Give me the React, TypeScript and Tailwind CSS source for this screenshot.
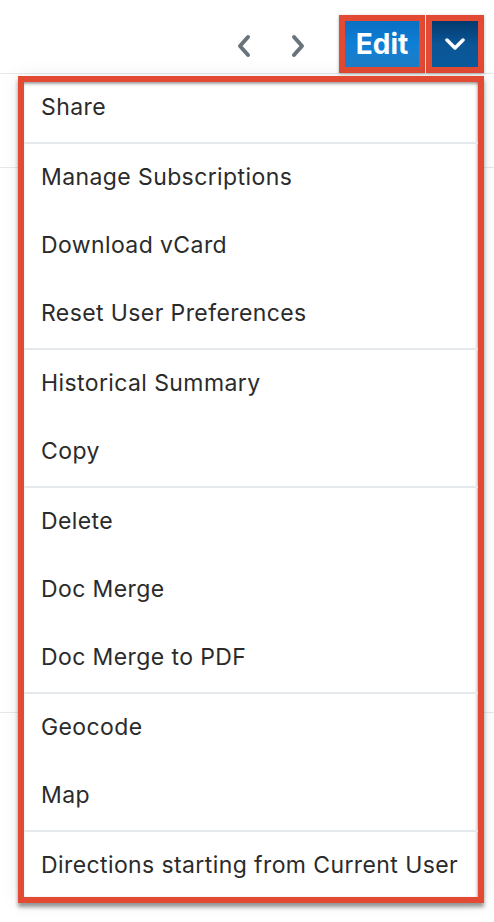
import React from "react";

const groups: string[][] = [
  ["Share"],
  ["Manage Subscriptions", "Download vCard", "Reset User Preferences"],
  ["Historical Summary", "Copy"],
  ["Delete", "Doc Merge", "Doc Merge to PDF"],
  ["Geocode", "Map"],
  ["Directions starting from Current User"],
];

export default function App() {
  return (
    <div
      className="relative w-[494px] h-[922px] bg-white overflow-hidden"
      style={{ fontFamily: "Inter, 'Noto Sans', sans-serif" }}
    >
      {/* header */}
      <header className="h-[74px] border-b border-[#e6e9ec] flex items-start justify-end">
        <div className="flex items-center gap-[38px] mt-[34px] mr-[33px]">
          <svg width="16" height="24" viewBox="0 0 16 24" fill="none">
            <polyline points="12,3 4,12 12,21" stroke="#6b737a" strokeWidth="4" strokeLinecap="round" strokeLinejoin="round" />
          </svg>
          <svg width="16" height="24" viewBox="0 0 16 24" fill="none">
            <polyline points="4,3 12,12 4,21" stroke="#6b737a" strokeWidth="4" strokeLinecap="round" strokeLinejoin="round" />
          </svg>
        </div>
        <div className="flex mt-[15px] mr-[10px]">
          <div className="border-[6px] border-[#e34a33] shadow-[0_1px_3px_rgba(0,0,0,0.3)]">
            <button className="w-[74px] h-[46px] bg-gradient-to-b from-[#0a6fc2] via-[#0d7fd6] to-[#1f7dc6] text-white font-bold text-[28px] leading-none flex items-center justify-center">
              Edit
            </button>
          </div>
          <div className="w-[1px] bg-white" />
          <div className="border-[6px] border-[#e34a33] shadow-[0_1px_3px_rgba(0,0,0,0.3)]">
            <button className="w-[46px] h-[46px] bg-gradient-to-b from-[#033a6e] via-[#0a5596] to-[#0b5a9c] flex items-center justify-center">
              <svg width="22" height="12" viewBox="0 0 22 12" fill="none">
                <polyline points="3,2 11,10 19,2" stroke="#ffffff" strokeWidth="3.5" strokeLinecap="round" strokeLinejoin="round" />
              </svg>
            </button>
          </div>
        </div>
      </header>

      {/* page rows behind */}
      <div className="h-[94px] border-b border-[#e6e9ec]" />
      <div className="h-[545px] border-b border-[#e6e9ec]" />

      {/* dropdown menu (annotated) */}
      <div className="absolute left-[18px] top-[76px] w-[466px] h-[827px] border-[6px] border-[#e34a33] shadow-[0_4px_4px_rgba(0,0,0,0.4),0_0_18px_rgba(0,0,0,0.08)] bg-white">
        <div className="h-full overflow-hidden shadow-[inset_0_3px_3px_-1px_rgba(0,0,0,0.35),inset_-2px_0_3px_-1px_rgba(0,0,0,0.25)]">
          <div className="-mt-[8px]">
            {groups.map((g, gi) => (
              <div key={gi}>
                {gi > 0 && <div className="h-[2px] bg-[#e6e9ec]" />}
                {g.map((item) => (
                  <div
                    key={item}
                    className="h-[68px] flex items-center pl-[17px] pb-[2px] text-[23px] tracking-[0.4px] text-[#2b2b2b]"
                  >
                    {item}
                  </div>
                ))}
              </div>
            ))}
          </div>
        </div>
      </div>
    </div>
  );
}
